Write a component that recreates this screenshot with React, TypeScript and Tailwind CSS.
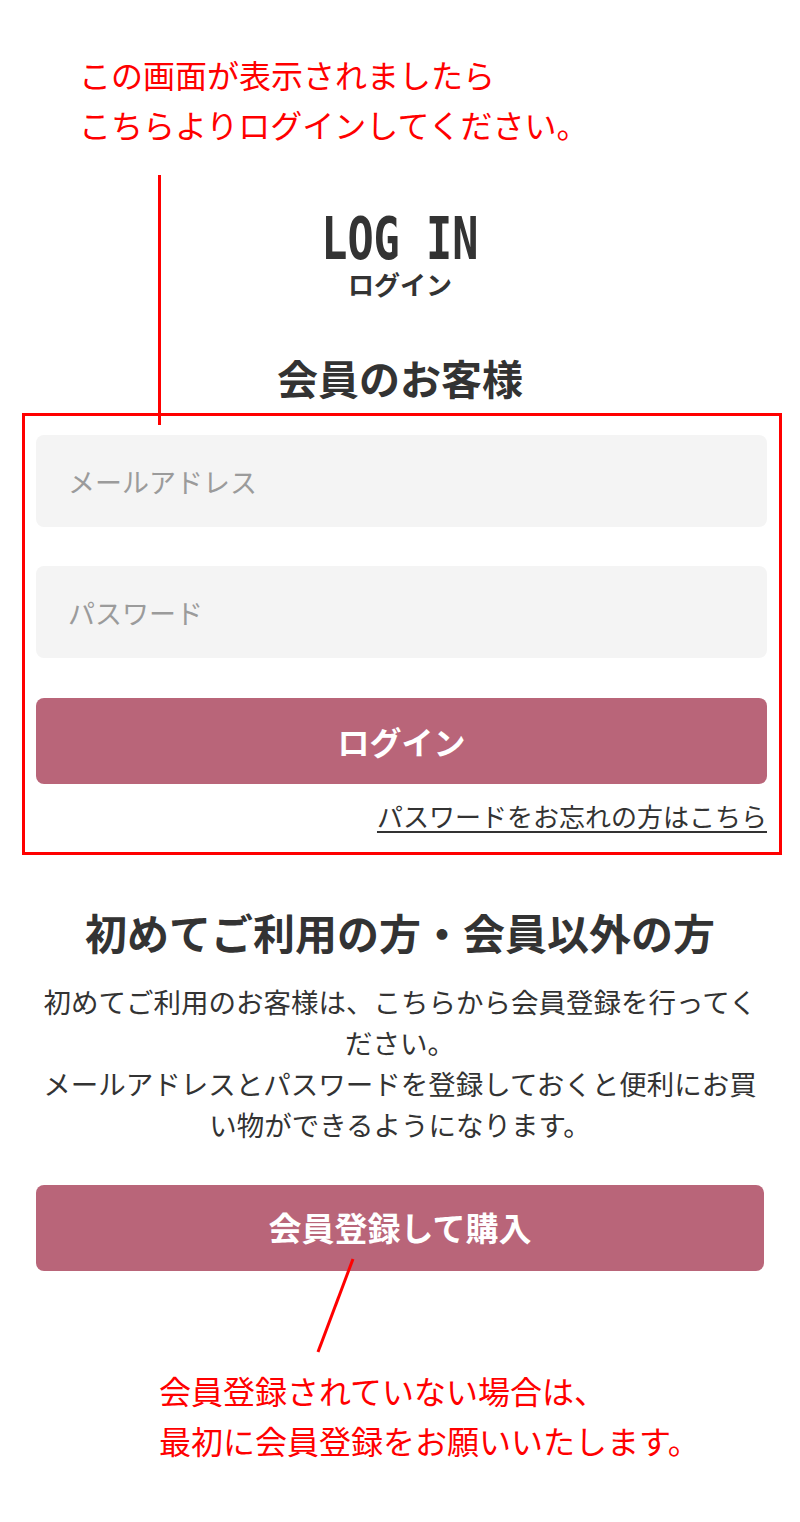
export default function App() {
  return (
    <div className="relative w-[800px] h-[1522px] bg-white text-[#333] font-['Noto_Sans_CJK_JP',sans-serif]">
      {/* top note */}
      <div className="pt-[49px] pl-[79px] text-[32px] leading-[50px] text-[#ff0000]">
        <p>この画面が表示されましたら</p>
        <p>こちらよりログインしてください。</p>
      </div>

      {/* pointer line to the login form */}
      <div className="absolute left-[158px] top-[175px] w-[3px] h-[250px] bg-[#ff0000]" />

      {/* title */}
      <div className="mt-[62px] flex flex-col items-center">
        <span className="inline-block scale-x-75 whitespace-pre text-[58px] leading-[56px] font-bold text-[#333] font-['DejaVu_Sans_Mono',monospace]">
          LOG IN
        </span>
        <span className="mt-[2px] text-[26px] leading-[30px] font-bold">ログイン</span>
        <h2 className="mt-[54px] text-[41px] leading-[48px] font-bold">会員のお客様</h2>
      </div>

      {/* login form */}
      <div className="mt-[12px] ml-[22px] w-[760px] border-[3px] border-[#ff0000] pt-[19px] pb-[20px] pl-[11px] pr-[12px]">
        <input
          type="email"
          placeholder="メールアドレス"
          className="block w-full h-[92px] rounded-[8px] bg-[#f4f4f4] pl-[32px] text-[27px] outline-none placeholder:text-[#9b9b9b]"
        />
        <input
          type="password"
          placeholder="パスワード"
          className="mt-[39px] block w-full h-[92px] rounded-[8px] bg-[#f4f4f4] pl-[32px] text-[27px] outline-none placeholder:text-[#9b9b9b]"
        />
        <button className="mt-[40px] w-full h-[86px] rounded-[8px] bg-[#b96579] text-white text-[32px] font-bold">
          ログイン
        </button>
        <div className="mt-[16px] text-right">
          <a className="text-[26px] leading-[32px] underline underline-offset-4 text-[#333]">
            パスワードをお忘れの方はこちら
          </a>
        </div>
      </div>

      {/* guests */}
      <h2 className="mt-[52px] text-center text-[42px] leading-[50px] font-bold">初めてご利用の方・会員以外の方</h2>
      <p className="mt-[24px] mx-[36px] text-center text-[27.5px] leading-[41px]">
        初めてご利用のお客様は、こちらから会員登録を行ってください。
        <br />
        メールアドレスとパスワードを登録しておくと便利にお買い物ができるようになります。
      </p>
      <div className="mt-[40px] px-[36px]">
        <button className="w-full h-[86px] rounded-[8px] bg-[#b96579] text-white text-[33px] font-bold">
          会員登録して購入
        </button>
      </div>

      {/* pointer line to the register button */}
      <svg className="absolute left-0 top-0 pointer-events-none" width="800" height="1522">
        <line x1="353" y1="1259" x2="318" y2="1352" stroke="#ff0000" strokeWidth="3" />
      </svg>

      {/* bottom note */}
      <div className="mt-[94px] pl-[159px] text-[32px] leading-[50px] text-[#ff0000]">
        <p>会員登録されていない場合は、</p>
        <p>最初に会員登録をお願いいたします。</p>
      </div>
    </div>
  );
}
